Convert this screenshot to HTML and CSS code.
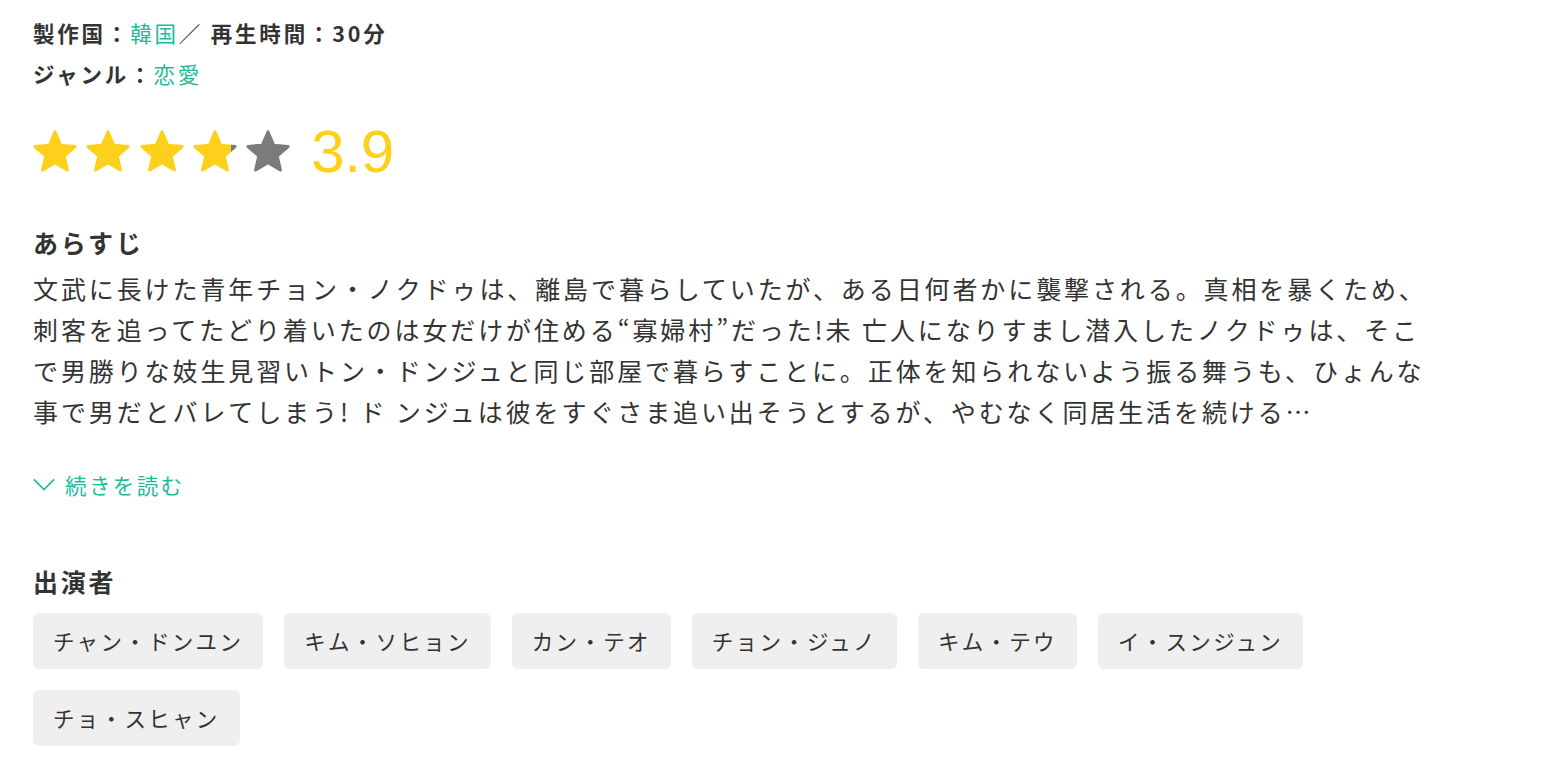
FILE: index.html
```html
<!DOCTYPE html>
<html lang="ja">
<head>
<meta charset="utf-8">
<title>作品詳細</title>
<link rel="stylesheet" href="styles.css">
</head>
<body>
<main class="detail">
  <div class="meta">
    <p class="meta-line"><b>製作国：</b><a class="link" href="#">韓国</a>／ <b>再生時間：30分</b></p>
    <p class="meta-line"><b>ジャンル：</b><a class="link" href="#">恋愛</a></p>
  </div>

  <div class="rating">
    <div class="stars">
      <svg class="star" viewBox="1 1 22 22"><path class="on" d="M12 17.27L18.18 21l-1.64-7.03L22 9.24l-7.19-.61L12 2 9.19 8.63 2 9.24l5.46 4.73L5.82 21z"/></svg>
      <svg class="star" viewBox="1 1 22 22"><path class="on" d="M12 17.27L18.18 21l-1.64-7.03L22 9.24l-7.19-.61L12 2 9.19 8.63 2 9.24l5.46 4.73L5.82 21z"/></svg>
      <svg class="star" viewBox="1 1 22 22"><path class="on" d="M12 17.27L18.18 21l-1.64-7.03L22 9.24l-7.19-.61L12 2 9.19 8.63 2 9.24l5.46 4.73L5.82 21z"/></svg>
      <svg class="star" viewBox="1 1 22 22">
        <defs>
          <linearGradient id="partial" x1="0" x2="1" y1="0" y2="0">
            <stop offset="0.9" stop-color="#fdd11b"/>
            <stop offset="0.9" stop-color="#7b7b7b"/>
          </linearGradient>
        </defs>
        <path class="part" d="M12 17.27L18.18 21l-1.64-7.03L22 9.24l-7.19-.61L12 2 9.19 8.63 2 9.24l5.46 4.73L5.82 21z"/>
      </svg>
      <svg class="star" viewBox="1 1 22 22"><path class="off" d="M12 17.27L18.18 21l-1.64-7.03L22 9.24l-7.19-.61L12 2 9.19 8.63 2 9.24l5.46 4.73L5.82 21z"/></svg>
    </div>
    <span class="score">3.9</span>
  </div>

  <section class="synopsis">
    <h2 class="heading">あらすじ</h2>
    <p class="story">文武に長けた青年チョン・ノクドゥは、離島で暮らしていたが、ある日何者かに襲撃される。真相を暴くため、<br>刺客を追ってたどり着いたのは女だけが住める“寡婦村”だった!未 亡人になりすまし潜入したノクドゥは、そこ<br>で男勝りな妓生見習いトン・ドンジュと同じ部屋で暮らすことに。正体を知られないよう振る舞うも、ひょんな<br>事で男だとバレてしまう! ド ンジュは彼をすぐさま追い出そうとするが、やむなく同居生活を続ける…</p>
    <a class="more" href="#">
      <svg class="chev" viewBox="0 0 24 14"><path d="M1 1.5l11 11 11-11"/></svg>
      <span>続きを読む</span>
    </a>
  </section>

  <section class="cast">
    <h2 class="heading">出演者</h2>
    <ul class="tags">
      <li class="tag">チャン・ドンユン</li>
      <li class="tag">キム・ソヒョン</li>
      <li class="tag">カン・テオ</li>
      <li class="tag">チョン・ジュノ</li>
      <li class="tag">キム・テウ</li>
      <li class="tag">イ・スンジュン</li>
      <li class="tag">チョ・スヒャン</li>
    </ul>
  </section>
</main>
</body>
</html>
```

FILE: styles.css
```css
* { box-sizing: border-box; }

html, body {
  margin: 0;
  padding: 0;
  background: #ffffff;
}

body {
  font-family: "Noto Sans CJK JP", "Noto Sans", sans-serif;
  color: #333333;
}

.detail {
  padding: 12px 0 0 33px;
}

.meta-line {
  margin: 0;
  font-size: 21.5px;
  line-height: 41px;
  letter-spacing: 2.8px;
  white-space: nowrap;
}

.meta-line b {
  font-weight: 700;
}

.link {
  color: #1fb99b;
  text-decoration: none;
}

.rating {
  display: flex;
  align-items: center;
  height: 60px;
  margin-top: 28px;
}

.stars {
  display: flex;
  gap: 9.3px;
}

.star {
  width: 44px;
  height: 44px;
  display: block;
}

.star path {
  stroke-width: 1.6;
  stroke-linejoin: round;
}

.star .on {
  fill: #fdd11b;
  stroke: #fdd11b;
}

.star .off {
  fill: #7b7b7b;
  stroke: #7b7b7b;
}

.star .part {
  fill: url(#partial);
  stroke: url(#partial);
}

.score {
  margin-left: 21px;
  font-family: "Liberation Sans", Arial, sans-serif;
  font-size: 60px;
  line-height: 60px;
  color: #fdd11b;
  letter-spacing: -0.3px;
}

.synopsis {
  margin-top: 40px;
}

.heading {
  margin: 0;
  font-size: 25px;
  font-weight: 700;
  line-height: 41px;
  letter-spacing: 2.8px;
}

.story {
  margin: 5px 0 0;
  font-size: 25px;
  line-height: 41px;
  letter-spacing: 2.9px;
  white-space: nowrap;
}

.more {
  display: inline-flex;
  align-items: center;
  gap: 10px;
  margin-top: 32px;
  height: 41px;
  color: #1fb99b;
  text-decoration: none;
  font-size: 21.5px;
  letter-spacing: 2.4px;
}

.chev {
  width: 22px;
  height: 13px;
  display: block;
}

.chev path {
  fill: none;
  stroke: #1fb99b;
  stroke-width: 1.8;
}

.cast {
  margin-top: 56px;
}

.tags {
  list-style: none;
  margin: 11px 0 0;
  padding: 0;
  display: flex;
  flex-wrap: wrap;
  gap: 21px;
  max-width: 1400px;
}

.tag {
  height: 56px;
  line-height: 56px;
  padding: 0 20px;
  background: #efefef;
  border-radius: 6px;
  font-size: 21.5px;
  letter-spacing: 2.3px;
  color: #333333;
  white-space: nowrap;
}
```
